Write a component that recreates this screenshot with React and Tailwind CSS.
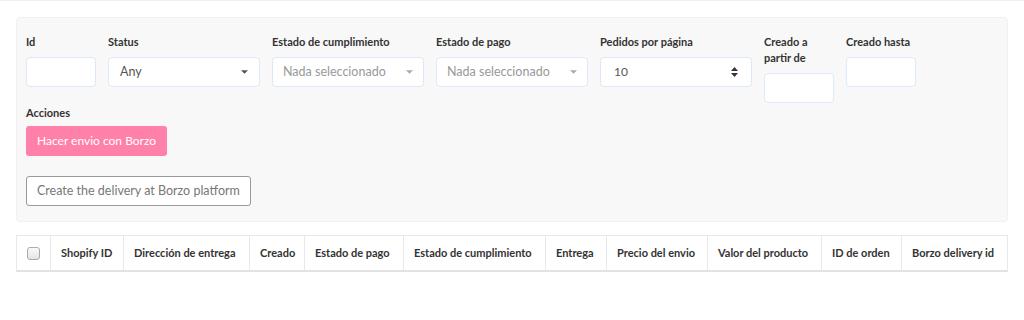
const Caret = ({ light }) => (
  <svg width="7" height="4" viewBox="0 0 8 4" className={light ? 'fill-[#aaa]' : 'fill-[#555]'}>
    <path d="M0 0h8L4 4z" />
  </svg>
);

const Field = ({ label, width, children }) => (
  <div className={`flex flex-col ${width}`}>
    <label className="text-[11px] font-bold text-[#333] leading-[16px] mb-[7px]">{label}</label>
    {children}
  </div>
);

const inputCls = 'h-[30px] bg-white border border-[#dce9fa] rounded-[4px]';

const headers = [
  ['Shopify ID', 'w-[73px]'],
  ['Dirección de entrega', 'w-[126px]'],
  ['Creado', 'w-[55px]'],
  ['Estado de pago', 'w-[99px]'],
  ['Estado de cumplimiento', 'w-[142px]'],
  ['Entrega', 'w-[61px]'],
  ['Precio del envio', 'w-[101px]'],
  ['Valor del producto', 'w-[114px]'],
  ['ID de orden', 'w-[80px]'],
  ['Borzo delivery id', 'flex-1'],
];

export default function App() {
  return (
    <div className="w-[1024px] h-[320px] bg-white border-t border-[#f0f0f0] font-['Lato','Liberation_Sans',sans-serif] px-[16px] pt-[16px]">
      {/* Filters */}
      <div className="bg-[#f8f8f8] border border-[#f0f0f0] rounded-[4px] px-[9px] pt-[16px] pb-[15px]">
        <div className="flex items-start gap-[12px]">
          <Field label="Id" width="w-[70px]">
            <input className={inputCls} />
          </Field>
          <Field label="Status" width="w-[152px]">
            <div className={`${inputCls} flex items-center justify-between px-[11px] text-[12.5px] text-[#555]`}>
              <span>Any</span>
              <Caret />
            </div>
          </Field>
          <Field label="Estado de cumplimiento" width="w-[152px]">
            <div className={`${inputCls} flex items-center justify-between px-[10px] text-[12.5px] text-[#999]`}>
              <span>Nada seleccionado</span>
              <Caret light />
            </div>
          </Field>
          <Field label="Estado de pago" width="w-[152px]">
            <div className={`${inputCls} flex items-center justify-between px-[10px] text-[12.5px] text-[#999]`}>
              <span>Nada seleccionado</span>
              <Caret light />
            </div>
          </Field>
          <Field label="Pedidos por página" width="w-[152px]">
            <div className={`${inputCls} flex items-center justify-between px-[13px] text-[12px] text-[#555]`}>
              <span>10</span>
              <svg width="7" height="10" viewBox="0 0 7 10" className="fill-[#333]">
                <path d="M0 4L3.5 0L7 4z M0 6h7L3.5 10z" />
              </svg>
            </div>
          </Field>
          <Field label="Creado a partir de" width="w-[70px]">
            <input className={inputCls} />
          </Field>
          <Field label="Creado hasta" width="w-[70px]">
            <input className={inputCls} />
          </Field>
        </div>

        <div className="mt-[2px] flex flex-col items-start">
          <span className="text-[11px] font-bold text-[#333] leading-[16px] mb-[5px]">Acciones</span>
          <button className="h-[30px] px-[11px] bg-[#ff80a9] text-white text-[12px] rounded-[3px]">
            Hacer envio con Borzo
          </button>
          <button className="mt-[20px] h-[30px] px-[10px] bg-white border border-[#999] text-[#777] text-[12.5px] rounded-[3px]">
            Create the delivery at Borzo platform
          </button>
        </div>
      </div>

      {/* Table */}
      <div className="mt-[13px] flex h-[37px] border border-[#e8e8e8] border-b-2 border-b-[#e2e2e2]">
        <div className="w-[34px] flex items-center justify-center border-r border-[#e8e8e8]">
          <span className="w-[13px] h-[13px] rounded-[3px] border border-[#aaa] bg-gradient-to-b from-[#fafafa] to-[#e4e4e4]" />
        </div>
        {headers.map(([h, w], i) => (
          <div
            key={h}
            className={`${w} flex items-center px-[10px] text-[11px] font-bold text-[#333] whitespace-nowrap ${i < headers.length - 1 ? 'border-r border-[#e8e8e8]' : ''}`}
          >
            {h}
          </div>
        ))}
      </div>
    </div>
  );
}
